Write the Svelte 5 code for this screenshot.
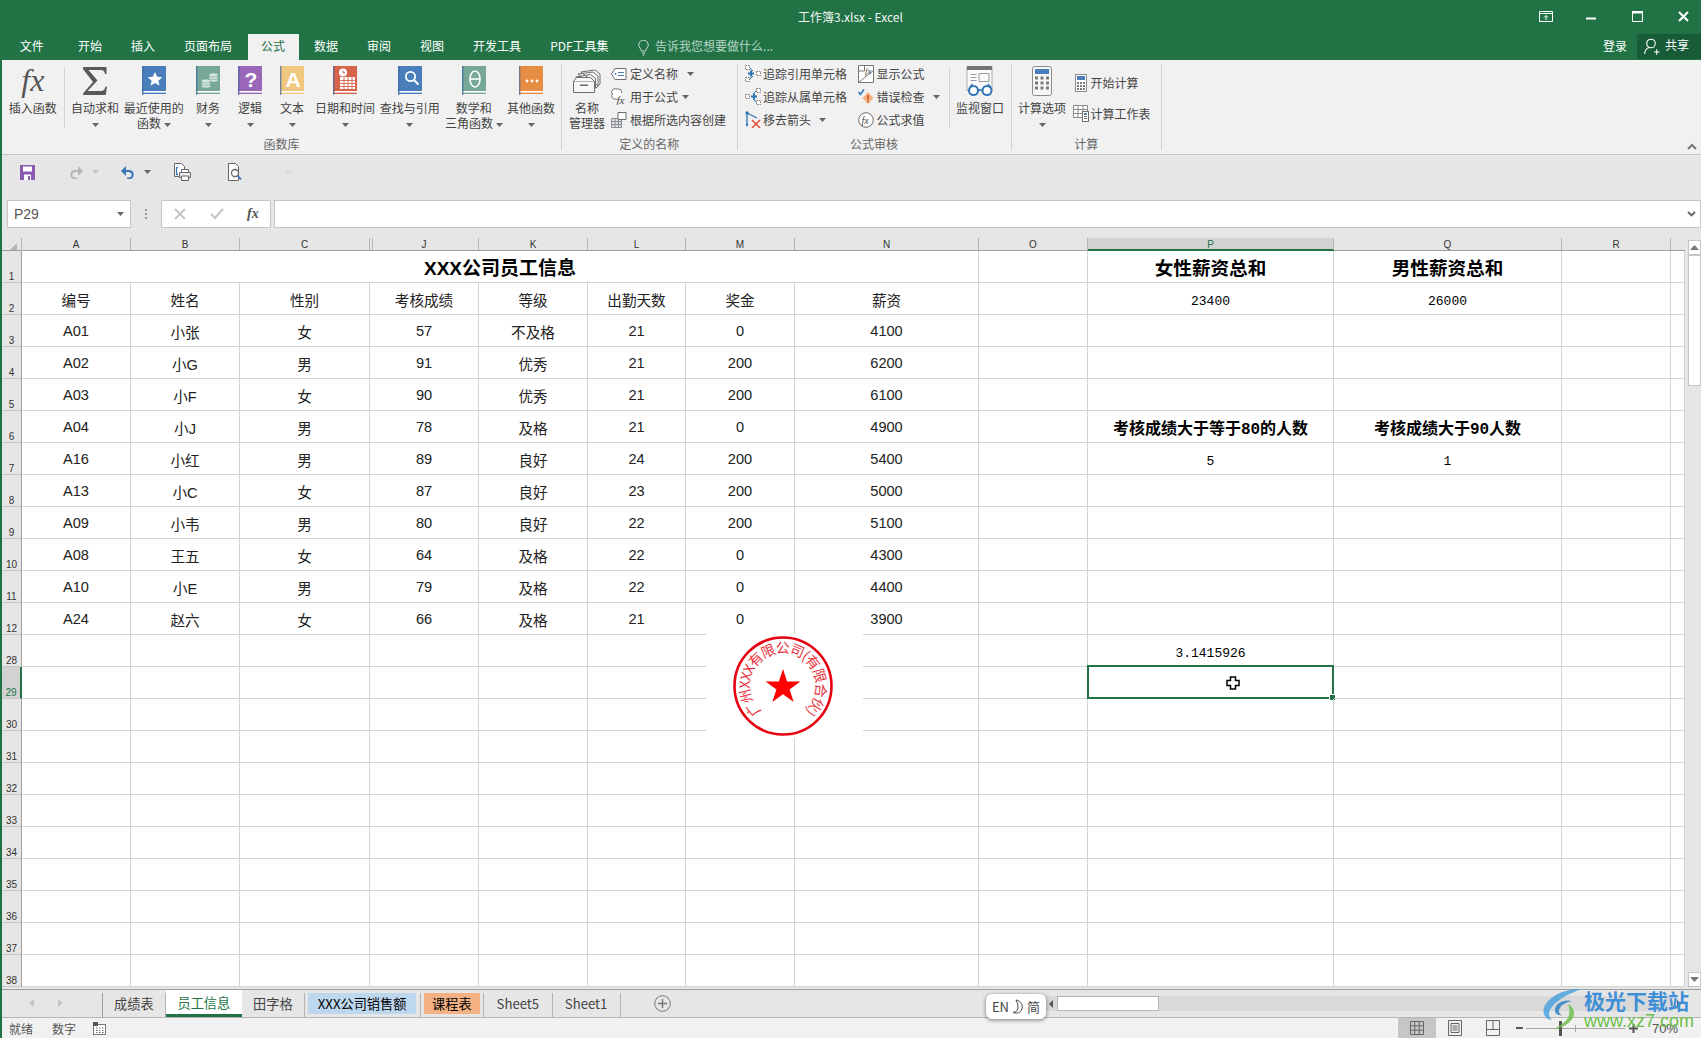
<script>
	const tabs = ['开始', '插入', '页面布局', '公式', '数据', '审阅', '视图', '开发工具', 'PDF工具集'];

	// 函数库 big buttons: [label lines, width, icon]
	const libButtons = [
		{ lines: ['自动求和'], w: 61, icon: 'sigma' },
		{ lines: ['最近使用的', '函数'], w: 56.5, color: '#4a7ebb', glyph: 'star' },
		{ lines: ['财务'], w: 52, color: '#76a797', glyph: 'coins' },
		{ lines: ['逻辑'], w: 32, color: '#9a66b8', glyph: 'q' },
		{ lines: ['文本'], w: 52, color: '#f0c77e', glyph: 'a' },
		{ lines: ['日期和时间'], w: 54, color: '#d6634a', glyph: 'date' },
		{ lines: ['查找与引用'], w: 75.4, color: '#4a7ebb', glyph: 'find' },
		{ lines: ['数学和', '三角函数'], w: 52.6, color: '#76a797', glyph: 'theta' },
		{ lines: ['其他函数'], w: 62, color: '#e68c43', glyph: 'more' }
	];

	const columns = ['A', 'B', 'C', 'J', 'K', 'L', 'M', 'N', 'O', 'P', 'Q', 'R', ''];

	const people = [
		['编号', '姓名', '性别', '考核成绩', '等级', '出勤天数', '奖金', '薪资'],
		['A01', '小张', '女', '57', '不及格', '21', '0', '4100'],
		['A02', '小G', '男', '91', '优秀', '21', '200', '6200'],
		['A03', '小F', '女', '90', '优秀', '21', '200', '6100'],
		['A04', '小J', '男', '78', '及格', '21', '0', '4900'],
		['A16', '小红', '男', '89', '良好', '24', '200', '5400'],
		['A13', '小C', '女', '87', '良好', '23', '200', '5000'],
		['A09', '小韦', '男', '80', '良好', '22', '200', '5100'],
		['A08', '王五', '女', '64', '及格', '22', '0', '4300'],
		['A10', '小E', '男', '79', '及格', '22', '0', '4400'],
		['A24', '赵六', '女', '66', '及格', '21', '0', '3900']
	];

	const rowLabels = [2, 3, 4, 5, 6, 7, 8, 9, 10, 11, 12];
	const emptyLabels = [28, 29, 30, 31, 32, 33, 34, 35, 36, 37, 38];

	// P and Q columns, keyed by row label
	const side = {
		2: [['23400', 'num'], ['26000', 'num']],
		6: [['考核成绩大于等于80的人数', 'sub'], ['考核成绩大于90人数', 'sub']],
		7: [['5', 'num'], ['1', 'num']],
		28: [['3.1415926', 'num'], ['', '']]
	};

	const sheets = [
		{ name: '成绩表', w: 62.6 },
		{ name: '员工信息', w: 76.5, cls: 'active' },
		{ name: '田字格', w: 62.5 },
		{ name: 'XXX公司销售额', w: 116, cls: 'blue' },
		{ name: '课程表', w: 63.5, cls: 'orange' },
		{ name: 'Sheet5', w: 68.5 },
		{ name: 'Sheet1', w: 68 }
	];
</script>

{#snippet arrow()}
	<svg class="caret" width="7" height="4" viewBox="0 0 7 4"><path d="M0 0h7L3.5 4z" fill="#666" /></svg>
{/snippet}

{#snippet book(color, glyph)}
	<svg width="24" height="29" viewBox="0 0 24 29">
		<rect width="24" height="28" fill={color} />
		<rect width="1.4" height="29" fill="#3d6a9e" opacity="0.7" />
		<rect x="1.4" y="25" width="22.6" height="1.6" fill="#fff" />
		{#if glyph === 'star'}
			<path d="M13 6l2.2 4.8 5 .5-3.8 3.4 1.1 5.1-4.5-2.7-4.5 2.7 1.1-5.1-3.8-3.4 5-.5z" fill="#fff" />
		{:else if glyph === 'coins'}
			<g fill="#d9e7e2" stroke="#76a797" stroke-width="0.7">
				<ellipse cx="17.5" cy="14" rx="4.6" ry="2" /><ellipse cx="17.5" cy="11.5" rx="4.6" ry="2" /><ellipse cx="17.5" cy="9" rx="4.6" ry="2" />
				<ellipse cx="10" cy="20" rx="4.6" ry="2" /><ellipse cx="10" cy="17.5" rx="4.6" ry="2" /><ellipse cx="10" cy="15" rx="4.6" ry="2" />
			</g>
		{:else if glyph === 'q'}
			<text x="13" y="21" text-anchor="middle" class="book-text" font-size="21">?</text>
		{:else if glyph === 'a'}
			<text x="13" y="21" text-anchor="middle" class="book-text" font-size="21">A</text>
		{:else if glyph === 'date'}
			<circle cx="10" cy="6.5" r="4" fill="#fff" />
			<path d="M10 4.5v2.2h2" stroke="#d6634a" stroke-width="1" fill="none" />
			<path d="M7 11h15v12H7z" fill="#fff" />
			<path d="M7 14.5h15M7 17.5h15M7 20.5h15M11 11v12M15 11v12M19 11v12" stroke="#d6634a" stroke-width="0.9" />
		{:else if glyph === 'find'}
			<circle cx="12.5" cy="10.5" r="4.6" fill="none" stroke="#fff" stroke-width="1.8" />
			<path d="M16 14l4.5 4.5" stroke="#fff" stroke-width="2.2" />
		{:else if glyph === 'theta'}
			<ellipse cx="13" cy="13" rx="5" ry="8" fill="none" stroke="#fff" stroke-width="1.6" />
			<path d="M8 13h10" stroke="#fff" stroke-width="1.6" />
		{:else if glyph === 'more'}
			<circle cx="8" cy="15" r="1.4" fill="#fff" /><circle cx="13" cy="15" r="1.4" fill="#fff" /><circle cx="18" cy="15" r="1.4" fill="#fff" />
		{/if}
	</svg>
{/snippet}

<div class="app">
	<header class="titlebar">
		<span class="doc-title">工作簿3.xlsx - Excel</span>
		<div class="win-btns">
			<svg width="14" height="11" viewBox="0 0 14 11"><path d="M.5.500h13v10H.5zM.5 2.500h13" fill="none" stroke="#fff" /><path d="M7 9V4.500M5 6.500l2-2 2 2" fill="none" stroke="#fff" /></svg>
			<svg class="w-min" width="10" height="3" viewBox="0 0 10 3"><rect width="10" height="2" y="0.5" fill="#fff" /></svg>
			<svg class="w-max" width="11" height="11" viewBox="0 0 11 11"><path d="M.5.500h10v10H.5z" fill="none" stroke="#fff" /><rect width="11" height="2.5" fill="#fff" /></svg>
			<svg class="w-close" width="11" height="11" viewBox="0 0 11 11"><path d="M1 1l9 9M10 1l-9 9" stroke="#fff" stroke-width="2" /></svg>
		</div>
	</header>

	<nav class="tabbar">
		<span class="tab file">文件</span>
		{#each tabs as t}
			<span class="tab" class:on={t === '公式'}>{t}</span>
		{/each}
		<svg class="bulb" width="11" height="16" viewBox="0 0 11 16"><path d="M3.500 11C3 8.500.7 7.500.7 5a4.800 4.800 0 0 1 9.600 0c0 2.500-2.300 3.500-2.800 6zM3.800 13h3.400M4.500 15h2" fill="none" stroke="#c9dcd0" /></svg>
		<span class="tell">告诉我您想要做什么...</span>
		<span class="login">登录</span>
		<span class="share">
			<svg width="16" height="17" viewBox="0 0 16 17"><circle cx="7" cy="5.500" r="4.300" fill="none" stroke="#fff" stroke-width="1.100" /><path d="M.6 16c.4-3.500 2.400-5.800 4.400-6.500M10 14h5.500M12.700 11.300v5.500" fill="none" stroke="#fff" stroke-width="1.100" /></svg>
			<span>共享</span>
		</span>
	</nav>

	<section class="ribbon">
		<div class="group lib">
			<div class="body">
				<div class="big fxbtn" style:width="61.6px">
					<div class="ico"><span class="fx">fx</span></div>
					<span>插入函数</span>
				</div>
				<i class="vsep"></i>
				{#each libButtons as b}
					<div class="big" style:width="{b.w}px">
						<div class="ico">
							{#if b.icon === 'sigma'}
								<svg width="24" height="28" viewBox="0 0 24 28"><path d="M0 0h23.500v7h-1.500c-.5-2.800-1.500-4-4-4H5.500l9 10.500L4.500 24H18c2.500 0 3.800-1.300 4.500-4.500H24L22.800 28H0v-1.500L10 15 0 2z" fill="#595959" /></svg>
							{:else}
								{@render book(b.color, b.glyph)}
							{/if}
						</div>
						{#each b.lines as line, i}
							<span class="line">{line}{#if i === 1}&nbsp;{@render arrow()}{/if}</span>
						{/each}
						{#if b.lines.length === 1}
							<span class="caret-row">{@render arrow()}</span>
						{/if}
					</div>
				{/each}
			</div>
			<div class="label">函数库</div>
		</div>

		<div class="group names">
			<div class="body">
				<div class="big mgr">
					<div class="ico">
						<svg width="30" height="29" viewBox="0 0 30 29" fill="#f7f7f7" stroke="#6d6d6d"><path d="M9 6l14-2 5 4v10l-2 2zM6 8l15-2 5 4v10l-2 2zM3.500 11l15-2.500 5 4v10" /><path d="M1.500 15.500h21v11h-21z" /><path d="M1.500 15.500l3-4h14l4 4" /><rect x="8" y="18.500" width="8" height="1.500" fill="#6d6d6d" stroke="none" /></svg>
					</div>
					<span class="line">名称</span>
					<span class="line">管理器</span>
				</div>
				<div class="list">
					<div class="small">
						<svg width="16" height="12" viewBox="0 0 16 12"><path d="M4 .5h11v11H4L.5 6z" fill="#fff" stroke="#6d6d6d" /><circle cx="4.500" cy="6" r="1" fill="#4a7ebb" /><path d="M7 4.500h6M7 7.500h6" stroke="#4a7ebb" /></svg>
						<span>定义名称</span><b class="gap10">{@render arrow()}</b>
					</div>
					<div class="small">
						<svg width="16" height="17" viewBox="0 0 16 17"><path d="M6 11H3.500a3 3 0 0 1-2-5 3 3 0 0 1 3-5h3a3 3 0 0 1 3 4" fill="#fff" stroke="#6d6d6d" /><text x="5.500" y="15.500" class="mini-fx" font-size="11">fx</text></svg>
						<span>用于公式</span><b class="gap5">{@render arrow()}</b>
					</div>
					<div class="small">
						<svg width="16" height="16" viewBox="0 0 16 16"><path d="M.5 6.500h10v9H.5zM.5 9.500h10M.5 12.500h10M4 6.500v9M7.500 6.500v9" fill="#dfe6ee" stroke="#8a8a8a" /><path d="M7 .5h8v7H7z" fill="#fff" stroke="#6d6d6d" /></svg>
						<span>根据所选内容创建</span>
					</div>
				</div>
			</div>
			<div class="label">定义的名称</div>
		</div>

		<div class="group audit">
			<div class="body">
				<div class="list col1">
					<div class="small">
						<svg width="16" height="17" viewBox="0 0 16 17"><path d="M.5.500h4v4h-4zM.5 12.500h4v4h-4zM11.500 6.500h4v4h-4z" fill="#fff" stroke="#777" stroke-dasharray="1.500 1" /><path d="M3 8.500h6M6 5.500v6" stroke="#2e75b6" stroke-width="2" /><path d="M5 3l3 3M5 14l3-3" stroke="#2e75b6" /></svg>
						<span>追踪引用单元格</span>
					</div>
					<div class="small">
						<svg width="16" height="17" viewBox="0 0 16 17"><path d="M11.500.500h4v4h-4zM11.500 12.500h4v4h-4zM.5 6.500h4v4h-4z" fill="#fff" stroke="#777" stroke-dasharray="1.500 1" /><path d="M6 8.500h6M9 5.500v6" stroke="#2e75b6" stroke-width="2" /><path d="M8 6l3-3M8 11l3 3" stroke="#2e75b6" /></svg>
						<span>追踪从属单元格</span>
					</div>
					<div class="small">
						<svg width="16" height="17" viewBox="0 0 16 17"><path d="M2 2l10 5M2 2v12" stroke="#2e75b6" stroke-width="1.300" fill="none" /><circle cx="2" cy="2" r="1.700" fill="#2e75b6" /><path d="M.5 13l1.500 3 1.500-3z" fill="#2e75b6" /><path d="M7 9l8 8M15 9l-8 8" stroke="#e0533d" stroke-width="1.600" /></svg>
						<span>移去箭头</span><b class="gap12">{@render arrow()}</b>
					</div>
				</div>
				<div class="list col2">
					<div class="small">
						<svg width="16" height="18" viewBox="0 0 16 18"><path d="M.5.500h15v17H.5z" fill="#fff" stroke="#777" /><path d="M.5 6h6V.5M.5 17.500l15-12" fill="none" stroke="#777" /><text x="7" y="9" class="mini-fx" font-size="9">fx</text></svg>
						<span>显示公式</span>
					</div>
					<div class="small">
						<svg width="16" height="16" viewBox="0 0 16 16"><path d="M10 3L15.500 9 10 15 4.500 9z" fill="#f4b183" /><path d="M10 6v5M10 12v1.500" stroke="#d4501e" stroke-width="1.500" /><path d="M.5 3l2 2.500L6 .5" fill="none" stroke="#2e75b6" stroke-width="1.500" /></svg>
						<span>错误检查</span><b class="gap12">{@render arrow()}</b>
					</div>
					<div class="small">
						<svg width="16" height="16" viewBox="0 0 16 16"><circle cx="8" cy="8" r="7.300" fill="#fff" stroke="#6d6d6d" /><text x="3.500" y="11.500" class="mini-fx" font-size="10">fx</text></svg>
						<span>公式求值</span>
					</div>
				</div>
				<i class="vsep audit-sep"></i>
				<div class="big watch">
					<div class="ico">
						<svg width="29" height="30" viewBox="0 0 29 30"><path d="M1 .5h25v24H1z" fill="#fafafa" stroke="#aaa" /><rect x="1" width="25" height="4" fill="#737373" /><path d="M13 7.500h10v8H13zM4.500 8.500h6M4.500 11.500h6M4.500 14.500h6" fill="none" stroke="#9a9a9a" /><circle cx="7.500" cy="24.500" r="4.500" fill="#fff" stroke="#2e75b6" stroke-width="2" /><circle cx="21" cy="24.500" r="4.500" fill="#fff" stroke="#2e75b6" stroke-width="2" /><path d="M12 24h5M3.500 22l3-4M25 22l-3-4" stroke="#2e75b6" stroke-width="1.500" /></svg>
					</div>
					<span class="line">监视窗口</span>
				</div>
			</div>
			<div class="label">公式审核</div>
		</div>

		<div class="group calc">
			<div class="body">
				<div class="big options">
					<div class="ico">
						<svg width="20" height="30" viewBox="0 0 20 30"><rect x=".5" y=".5" width="19" height="29" rx="2" fill="#f7f7f7" stroke="#8c8c8c" /><rect x="3" y="3" width="14" height="5" fill="#4a7ebb" /><path d="M3 10.500h3v3H3zM8.500 10.500h3v3h-3zM14 10.500h3v3h-3zM3 15.500h3v3H3zM8.500 15.500h3v3h-3zM14 15.500h3v3h-3zM3 20.500h3v3H3zM8.500 20.500h3v3h-3zM14 20.500h3v3h-3z" fill="#7a7a7a" /></svg>
					</div>
					<span class="line">计算选项</span>
					<span class="caret-row">{@render arrow()}</span>
				</div>
				<div class="list calc-list">
					<div class="small tall">
						<svg width="12" height="18" viewBox="0 0 12 18"><rect x=".5" y=".5" width="11" height="17" fill="#fff" stroke="#8c8c8c" /><rect x="2" y="2" width="8" height="4" fill="#4a7ebb" /><path d="M2 8h2v2H2zM5 8h2v2H5zM8 8h2v2H8zM2 11h2v2H2zM5 11h2v2H5zM8 11h2v2H8zM2 14h2v2H2zM5 14h2v2H5zM8 14h2v2H8z" fill="#7a7a7a" /></svg>
						<span>开始计算</span>
					</div>
					<div class="small tall">
						<svg width="16" height="17" viewBox="0 0 16 17"><path d="M.5.500h14v12H.5zM.5 4.500h14M.5 8.500h14M5 .5v12M10 .5v12" fill="#fff" stroke="#8c8c8c" /><rect x="9.500" y="6.500" width="6" height="10" fill="#fff" stroke="#6d6d6d" /><rect x="11" y="8" width="3" height="2" fill="#4a7ebb" /><path d="M11 11.500h3M11 13.500h3" stroke="#777" /></svg>
						<span>计算工作表</span>
					</div>
				</div>
			</div>
			<div class="label">计算</div>
		</div>

		<svg class="collapse" width="10" height="7" viewBox="0 0 10 7"><path d="M1 6l4-4 4 4" fill="none" stroke="#777" stroke-width="2" /></svg>
	</section>

	<section class="qat">
		<svg class="q-save" width="15" height="15" viewBox="0 0 15 15"><path d="M0 0h15v15H0z" fill="#8a5bb0" /><rect x="3" y="1.500" width="9" height="5" fill="#fff" /><rect x="4" y="9.500" width="7" height="5.500" fill="#fff" /><rect x="8" y="11" width="2" height="4" fill="#8a5bb0" /></svg>
		<svg class="q-redo" width="15" height="13" viewBox="0 0 15 13"><path d="M13 5H5.500a3.800 3.800 0 0 0 0 7.500H8" fill="none" stroke="#b5b5b5" stroke-width="2" /><path d="M9 0l5 5-5 5z" fill="#b5b5b5" /></svg>
		<svg class="q-drop1" width="7" height="4" viewBox="0 0 7 4"><path d="M0 0h7L3.500 4z" fill="#c2c2c2" /></svg>
		<svg class="q-undo" width="15" height="13" viewBox="0 0 15 13"><path d="M2 5h7.500a3.800 3.800 0 0 1 0 7.500H7" fill="none" stroke="#3a76b8" stroke-width="2" /><path d="M6 0L1 5l5 5z" fill="#3a76b8" /></svg>
		<svg class="q-drop2" width="7" height="4" viewBox="0 0 7 4"><path d="M0 0h7L3.500 4z" fill="#666" /></svg>
		<svg class="q-print" width="17" height="18" viewBox="0 0 17 18"><path d="M.5.500h7l3 3v10H.5z" fill="#fff" stroke="#666" /><path d="M2.500 4.500h1.500M2.500 4.500v7h1.500" fill="none" stroke="#3a76b8" stroke-width="1.300" /><path d="M5.500 9.500h11v5h-11z" fill="#eee" stroke="#666" /><path d="M7.500 6.500h7v3h-7zM7.500 13h7v4.500h-7z" fill="#fff" stroke="#666" /></svg>
		<svg class="q-find" width="14" height="18" viewBox="0 0 14 18"><path d="M.5.500h7l3 3v14H.5z" fill="#fff" stroke="#666" /><circle cx="7" cy="10" r="3.500" fill="#fff" stroke="#666" stroke-width="1.300" /><path d="M9.500 12.500l3.500 4" stroke="#3a76b8" stroke-width="1.800" /></svg>
		<svg class="q-more" width="7" height="6" viewBox="0 0 7 6"><path d="M0 0h7M0 2h7L3.500 6z" stroke="#ddd" fill="#ddd" /></svg>
	</section>

	<section class="formula">
		<div class="namebox">
			<span>P29</span>
			<svg width="7" height="4" viewBox="0 0 7 4"><path d="M0 0h7L3.500 4z" fill="#666" /></svg>
		</div>
		<div class="dots"><i></i><i></i><i></i></div>
		<div class="fxbox">
			<svg width="12" height="12" viewBox="0 0 12 12"><path d="M1 1l10 10M11 1L1 11" stroke="#c4c4c4" stroke-width="1.800" /></svg>
			<svg width="14" height="12" viewBox="0 0 14 12"><path d="M1 6l4 4 8-9" fill="none" stroke="#c4c4c4" stroke-width="2.200" /></svg>
			<span class="mini-fx-label">fx</span>
		</div>
		<div class="input">
			<svg width="9" height="6" viewBox="0 0 9 6"><path d="M1 1l3.500 3.500L8 1" fill="none" stroke="#666" stroke-width="1.800" /></svg>
		</div>
	</section>

	<section class="workarea">
		<div class="sheet">
			<div class="row head">
				<div class="corner"><svg width="7" height="7" viewBox="0 0 7 7"><path d="M7 0v7H0z" fill="#b5b5b5" /></svg></div>
				{#each columns as c}
					<div class="colh" class:cur={c === 'P'} class:after-hidden={c === 'J'}>{c}</div>
				{/each}
			</div>

			<div class="row">
				<div class="rowh">1</div>
				<div class="cell title">XXX公司员工信息</div>
				<div class="cell"></div>
				<div class="cell heading">女性薪资总和</div>
				<div class="cell heading">男性薪资总和</div>
				<div class="cell"></div>
				<div class="cell"></div>
			</div>

			{#each people as p, i}
				{@const label = rowLabels[i]}
				<div class="row">
					<div class="rowh">{label}</div>
					{#each p as v}
						<div class="cell">{v}</div>
					{/each}
					<div class="cell"></div>
					<div class="cell {side[label]?.[0][1] ?? ''}">{side[label]?.[0][0] ?? ''}</div>
					<div class="cell {side[label]?.[1][1] ?? ''}">{side[label]?.[1][0] ?? ''}</div>
					<div class="cell"></div>
					<div class="cell"></div>
				</div>
			{/each}

			{#each emptyLabels as label}
				<div class="row">
					<div class="rowh" class:cur={label === 29}>{label}</div>
					{#each columns as c, j}
						<div class="cell {j === 9 ? (side[label]?.[0][1] ?? '') : ''}">
							{#if j === 9}{side[label]?.[0][0] ?? ''}{/if}
							{#if j === 9 && label === 29}
								<div class="selection"><i class="handle"></i></div>
								<svg class="cursor" width="14" height="14" viewBox="0 0 14 14"><path d="M4.500 1h5v3.500H13v5H9.500V13h-5V9.500H1v-5h3.500z" fill="#fff" stroke="#000" stroke-width="1.500" /></svg>
							{/if}
						</div>
					{/each}
				</div>
			{/each}

			<svg class="stamp" width="157" height="104" viewBox="0 0 157 104">
				<rect width="157" height="104" fill="#fff" />
				<circle cx="77" cy="52" r="48.500" fill="none" stroke="#e60012" stroke-width="2.600" />
				<path id="stamp-arc" d="M55.800 77.300 A33 33 0 1 1 98.200 77.300" fill="none" />
				<text class="stamp-text" font-size="14" fill="#e8303a">
					<textPath href="#stamp-arc" textLength="160" lengthAdjust="spacing">广州XXX有限公司(有限合伙)</textPath>
				</text>
				<path d="M77 35l4.100 12.600h13.300l-10.800 7.800 4.100 12.700L77 60.300l-10.700 7.800 4.100-12.700-10.800-7.800h13.300z" fill="#ff0000" />
			</svg>
		</div>

		<aside class="vscroll">
			<div class="vbtn"><svg width="9" height="5" viewBox="0 0 9 5"><path d="M4.500 0L9 5H0z" fill="#777" /></svg></div>
			<div class="vthumb"></div>
			<div class="vspace"></div>
			<div class="vbtn"><svg width="9" height="5" viewBox="0 0 9 5"><path d="M0 0h9L4.500 5z" fill="#777" /></svg></div>
		</aside>
	</section>

	<section class="sheetbar">
		<div class="nav">
			<svg width="5" height="8" viewBox="0 0 5 8"><path d="M5 0v8L0 4z" fill="#c4c4c4" /></svg>
			<svg width="5" height="8" viewBox="0 0 5 8"><path d="M0 0v8l5-4z" fill="#c4c4c4" /></svg>
		</div>
		<div class="sheets">
			{#each sheets as s}
				<div class="sheet-tab {s.cls ?? ''}" style:width="{s.w}px"><span>{s.name}</span></div>
			{/each}
		</div>
		<svg class="add" width="17" height="17" viewBox="0 0 17 17"><circle cx="8.500" cy="8.500" r="7.800" fill="none" stroke="#777" /><path d="M8.500 4v9M4 8.500h9" stroke="#777" stroke-width="1.400" /></svg>
		<div class="hscroll">
			<div class="hbtn"><svg width="4" height="8" viewBox="0 0 4 8"><path d="M4 0v8L0 4z" fill="#555" /></svg></div>
			<div class="hthumb"></div>
			<div class="hbtn end"><svg width="4" height="8" viewBox="0 0 4 8"><path d="M0 0v8l4-4z" fill="#555" /></svg></div>
		</div>
	</section>

	<footer class="status">
		<span class="st1">就绪</span>
		<span class="st2">数字</span>
		<svg width="13" height="13" viewBox="0 0 13 13"><rect x=".5" y="2.500" width="12" height="10" fill="#fff" stroke="#777" /><rect width="5" height="4" fill="#555" /><path d="M3 6h1.500M6 6h1.500M9 6h1.500M3 8.500h1.500M6 8.500h1.500M9 8.500h1.500M3 10.500h1.500M6 10.500h1.500M9 10.500h1.500" stroke="#666" /></svg>
		<div class="views">
			<div class="view on"><svg width="14" height="14" viewBox="0 0 14 14"><path d="M.5.500h13v13H.5zM.5 4.800h13M.5 9.200h13M4.800.5v13M9.200.5v13" fill="none" stroke="#666" /></svg></div>
			<div class="view"><svg width="14" height="16" viewBox="0 0 14 16"><path d="M.5.500h13v15H.5z" fill="none" stroke="#666" /><path d="M3 3.500h8v9H3zM4.500 6h5M4.500 8h5M4.500 10h5" fill="none" stroke="#666" /></svg></div>
			<div class="view"><svg width="14" height="16" viewBox="0 0 14 16"><path d="M.5.500h13v15H.5zM7 .5v9M.5 9.500h13" fill="none" stroke="#666" /></svg></div>
		</div>
		<div class="zoom">
			<i class="minus"></i>
			<div class="slider"><i class="tick"></i><i class="knob"></i></div>
			<svg width="9" height="9" viewBox="0 0 9 9"><path d="M4.500 0v9M0 4.500h9" stroke="#555" stroke-width="2" /></svg>
			<span>70%</span>
		</div>
	</footer>

	<div class="ime"><span>EN</span><svg width="12" height="15" viewBox="0 0 12 15"><path d="M4 1c5 1 7 5 6 9s-5 4.500-9 3.500c3.500-.5 5-2.500 5-5.500S5 3.500 4 1z" fill="none" stroke="#444" /></svg><span>简</span></div>

	<div class="mark">
		<svg width="44" height="42" viewBox="0 0 44 42">
			<path d="M40 1C24 0 6 8 2 20c-2 7 3 12 8 12-4-3-4-8 0-13C16 11 28 5 40 1z" fill="#4aa3df" opacity="0.85" />
			<path d="M30 13c-8-2-16 2-17 8-1 4 3 7 7 6-3-1-4-4-2-7 2-4 7-6 12-7z" fill="#2f7fc1" opacity="0.85" />
			<path d="M26 16c6 3 8 9 4 15-3 5-10 9-18 10 9-5 14-9 15-14 1-4 0-8-1-11z" fill="#6cc04a" opacity="0.85" />
		</svg>
		<div class="mark-text">
			<span class="mk1">极光下载站</span>
			<span class="mk2">www.xz7.com</span>
		</div>
	</div>
</div>

<style>
	:global(body) {
		margin: 0;
		background: #fff;
	}
	.app {
		position: relative;
		width: 1701px;
		height: 1038px;
		box-sizing: border-box;
		border-left: 2px solid #217346;
		overflow: hidden;
		display: flex;
		flex-direction: column;
		font-family: "Noto Sans CJK SC", "Liberation Sans", sans-serif;
		font-size: 12px;
		color: #444;
		background: #e6e6e6;
	}
	.titlebar {
		height: 34px;
		flex: none;
		background: #217346;
		color: #fff;
		position: relative;
		display: flex;
		align-items: center;
	}
	.doc-title {
		position: absolute;
		left: 796px;
		top: 8px;
		line-height: 18px;
		color: #f2f7f4;
	}
	.win-btns {
		margin-left: auto;
		display: flex;
		align-items: center;
		padding: 0 12px 2px 0;
	}
	.win-btns svg {
		display: block;
	}
	.w-min {
		margin: 4px 0 0 33px;
	}
	.w-max {
		margin-left: 36px;
	}
	.w-close {
		margin-left: 35px;
	}
	.tabbar {
		height: 26px;
		flex: none;
		background: #217346;
		color: #fff;
		display: flex;
		align-items: stretch;
		line-height: 24px;
		margin-left: -2px;
	}
	.tab {
		padding: 0 14.5px;
	}
	.tab.file {
		width: 63.5px;
		box-sizing: border-box;
		padding: 0;
		text-align: center;
	}
	.tab.on {
		background: #f1f1f1;
		color: #217346;
		margin: 0 1px;
		padding: 0 13.5px;
	}
	.bulb {
		margin: 6px 0 0 15px;
	}
	.tell {
		margin-left: 6px;
		color: #b9d3c4;
	}
	.login {
		margin-left: auto;
		margin-right: 10px;
	}
	.share {
		width: 64px;
		background: #185c37;
		display: flex;
		align-items: center;
		gap: 5px;
		padding-left: 7px;
		box-sizing: border-box;
		line-height: 20px;
		height: 25px;
	}
	.share span {
		margin-top: -4px;
	}
	.ribbon {
		height: 95px;
		flex: none;
		box-sizing: border-box;
		background: #f1f1f1;
		border-bottom: 1px solid #c6c6c6;
		display: flex;
		position: relative;
		line-height: 15px;
	}
	.group {
		display: flex;
		flex-direction: column;
		border-right: 1px solid #d2d2d2;
		margin: 4px 0;
		box-sizing: border-box;
	}
	.group.lib {
		width: 560px;
	}
	.group.names {
		width: 175.5px;
	}
	.group.audit {
		width: 274px;
	}
	.group.calc {
		width: 150.5px;
	}
	.body {
		height: 72px;
		display: flex;
		flex: none;
	}
	.label {
		text-align: center;
		color: #666;
		line-height: 16px;
	}
	.vsep {
		width: 1px;
		height: 60px;
		margin-top: 4px;
		background: #d2d2d2;
		flex: none;
	}
	.big {
		display: flex;
		flex-direction: column;
		align-items: center;
		flex: none;
		white-space: nowrap;
	}
	.big .line,
	.fxbtn > span {
		display: block;
		height: 15px;
	}
	.ico {
		height: 29px;
		margin: 2px 0 5px;
		display: flex;
		align-items: center;
		justify-content: center;
	}
	.ico svg {
		display: block;
	}
	.fx {
		font-family: "Liberation Serif", serif;
		font-style: italic;
		font-size: 32px;
		line-height: 29px;
		color: #555;
	}
	.caret {
		vertical-align: middle;
	}
	.caret-row {
		display: block;
		height: 15px;
	}
	.mgr {
		width: 50px;
	}
	.list {
		display: flex;
		flex-direction: column;
		margin-top: -2px;
	}
	.small {
		height: 23px;
		display: flex;
		align-items: center;
		white-space: nowrap;
	}
	.small > svg {
		width: 16px;
		flex: none;
		margin-right: 2px;
	}
	.small b {
		font-weight: normal;
		display: flex;
	}
	.gap10 {
		margin-left: 9px;
	}
	.gap5 {
		margin-left: 4px;
	}
	.gap12 {
		margin-left: 8px;
	}
	.names .list {
		margin-left: -1px;
	}
	.names .small > svg {
		margin-right: 3px;
	}
	.col1 {
		margin-left: 7.5px;
		width: 112.5px;
	}
	.col2 {
		width: 91px;
	}
	.col2 .small > svg {
		margin-right: 3px;
	}
	.watch {
		width: 61px;
	}
	.options {
		width: 61px;
	}
	.calc-list {
		padding-top: 5px;
	}
	.small.tall {
		height: 31px;
	}
	.collapse {
		position: absolute;
		right: 4px;
		bottom: 4px;
	}
	.book-text {
		font-family: "Liberation Sans", sans-serif;
		font-weight: bold;
		fill: #fff;
	}
	.mini-fx {
		font-family: "Liberation Serif", serif;
		font-style: italic;
		fill: #444;
	}
	.qat {
		height: 45px;
		flex: none;
		display: flex;
		align-items: center;
		padding-bottom: 11px;
		box-sizing: border-box;
	}
	.q-save {
		margin-left: 18px;
	}
	.q-redo {
		margin-left: 34px;
	}
	.q-drop1 {
		margin-left: 8px;
	}
	.q-undo {
		margin-left: 21px;
	}
	.q-drop2 {
		margin-left: 9px;
	}
	.q-print {
		margin-left: 23px;
	}
	.q-find {
		margin-left: 37px;
	}
	.q-more {
		margin-left: 43px;
	}
	.formula {
		height: 28px;
		flex: none;
		display: flex;
		align-items: stretch;
		margin-bottom: 10px;
	}
	.namebox {
		width: 124px;
		margin-left: 5px;
		box-sizing: border-box;
		background: #fff;
		border: 1px solid #c6c6c6;
		display: flex;
		align-items: center;
		justify-content: space-between;
		padding: 0 6px 0 6px;
		font-family: "Liberation Sans", sans-serif;
		font-size: 14px;
		color: #555;
	}
	.dots {
		width: 30px;
		display: flex;
		flex-direction: column;
		align-items: center;
		justify-content: center;
		gap: 2px;
	}
	.dots i {
		width: 2px;
		height: 2px;
		background: #9a9a9a;
	}
	.fxbox {
		width: 110px;
		box-sizing: border-box;
		background: #fff;
		border: 1px solid #c6c6c6;
		display: flex;
		align-items: center;
		padding-left: 12px;
		gap: 24px;
	}
	.mini-fx-label {
		font-family: "Liberation Serif", serif;
		font-style: italic;
		font-weight: bold;
		font-size: 14px;
		color: #555;
		margin-left: -1px;
	}
	.input {
		flex: 1;
		margin-left: 3px;
		box-sizing: border-box;
		background: #fff;
		border: 1px solid #c6c6c6;
		display: flex;
		align-items: center;
		justify-content: flex-end;
		padding-right: 4px;
	}
	.workarea {
		height: 749px;
		flex: none;
		display: flex;
	}
	.sheet {
		width: 1683px;
		flex: none;
		position: relative;
		background: #fff;
	}
	.row {
		display: grid;
		grid-template-columns: 20px 109px 109px 130px 109px 109px 98px 109px 184px 109px 246px 228px 109px 14px;
		height: 32px;
		box-sizing: border-box;
	}
	.row.head {
		height: 13px;
		background: #e6e6e6;
		border-bottom: 1px solid #9f9f9f;
	}
	.corner {
		display: flex;
		justify-content: flex-end;
		align-items: flex-end;
		padding: 0 4px 1px 0;
		border-right: 1px solid #b5b5b5;
	}
	.corner svg {
		display: block;
	}
	.colh {
		border-right: 1px solid #b5b5b5;
		font-family: "Liberation Sans", sans-serif;
		font-size: 10px;
		line-height: 14px;
		text-align: center;
		color: #333;
		height: 12px;
	}
	.colh.after-hidden {
		box-shadow: inset 2px 0 #e6e6e6, inset 3px 0 #b5b5b5;
	}
	.colh.cur {
		background: #d2d2d2;
		color: #217346;
		border-bottom: 2px solid #217346;
		height: 13px;
		box-sizing: border-box;
	}
	.colh:nth-last-child(1) {
		border-right: 0;
	}
	.rowh {
		background: #e6e6e6;
		border-right: 1px solid #9f9f9f;
		border-bottom: 1px solid #c6c6c6;
		font-family: "Liberation Sans", sans-serif;
		font-size: 10px;
		line-height: 10px;
		color: #333;
		text-align: center;
		display: flex;
		align-items: flex-end;
		justify-content: center;
		box-sizing: border-box;
	}
	.rowh.cur {
		background: #d2d2d2;
		color: #217346;
		border-right: 2px solid #217346;
	}
	.cell {
		border-right: 1px solid #d4d4d4;
		border-bottom: 1px solid #d4d4d4;
		box-sizing: border-box;
		display: flex;
		align-items: center;
		justify-content: center;
		position: relative;
		font-family: "Liberation Sans", "Noto Sans CJK SC", sans-serif;
		font-size: 14.6px;
		color: #222;
		white-space: nowrap;
		padding-top: 1px;
	}
	.cell.title {
		grid-column: span 8;
		font-size: 19px;
		font-weight: bold;
		color: #000;
		padding-top: 0;
	}
	.cell.heading {
		font-size: 18.6px;
		font-weight: bold;
		color: #000;
		padding-top: 0;
	}
	.cell.sub {
		font-family: "Liberation Mono", "Noto Sans CJK SC", sans-serif;
		font-size: 16px;
		font-weight: bold;
		color: #000;
		padding-top: 0;
	}
	.cell.num {
		font-family: "Liberation Mono", monospace;
		font-size: 13px;
		color: #000;
		padding-top: 5px;
	}
	.selection {
		position: absolute;
		left: -1px;
		top: -2px;
		width: 247px;
		height: 34px;
		box-sizing: border-box;
		border: 2px solid #217346;
	}
	.handle {
		position: absolute;
		right: -3px;
		bottom: -3px;
		width: 5px;
		height: 5px;
		background: #217346;
		border: 1px solid #fff;
		border-width: 1px 0 0 1px;
	}
	.cursor {
		position: absolute;
		left: 138px;
		top: 9px;
	}
	.stamp {
		position: absolute;
		left: 704px;
		top: 396px;
	}
	.stamp-text {
		font-family: "Noto Sans CJK SC", "Liberation Sans", sans-serif;
	}
	.vscroll {
		flex: 1;
		display: flex;
		flex-direction: column;
		padding: 2px 0 0 3px;
	}
	.vbtn {
		height: 15px;
		flex: none;
		background: #fff;
		border: 1px solid #c6c6c6;
		box-sizing: border-box;
		display: flex;
		align-items: center;
		justify-content: center;
	}
	.vthumb {
		height: 131px;
		flex: none;
		background: #fff;
		border: 1px solid #c6c6c6;
		box-sizing: border-box;
	}
	.vspace {
		flex: 1;
	}
	.sheetbar {
		height: 28px;
		flex: none;
		margin-top: 2px;
		box-sizing: border-box;
		border-top: 1px solid #9f9f9f;
		display: flex;
		align-items: flex-start;
		background: #e6e6e6;
	}
	.nav {
		width: 100px;
		display: flex;
		gap: 24px;
		padding: 9px 0 0 27px;
		box-sizing: border-box;
	}
	.nav svg {
		display: block;
	}
	.sheets {
		display: flex;
		height: 24px;
		border-left: 1px solid #9f9f9f;
		margin-top: 3px;
	}
	.sheet-tab {
		height: 100%;
		box-sizing: border-box;
		border-right: 1px solid #b5b5b5;
		display: flex;
		align-items: center;
		justify-content: center;
		font-size: 13.2px;
		color: #444;
		white-space: nowrap;
		padding-bottom: 4px;
	}
	.sheet-tab.active {
		background: #fff;
		color: #217346;
		border-right: 0;
		border-bottom: 3px solid #217346;
		margin-top: -3px;
		height: 27px;
		padding-bottom: 0;
	}
	.sheet-tab.blue,
	.sheet-tab.orange {
		padding-bottom: 0;
	}
	.sheet-tab.blue span,
	.sheet-tab.orange span {
		display: flex;
		align-items: center;
		justify-content: center;
		height: 21px;
		margin-top: -3px;
		width: calc(100% - 7px);
		background: #bdd7ee;
		color: #000;
	}
	.sheet-tab.orange span {
		background: #f4b183;
	}
	.add {
		margin: 5px 0 0 33px;
	}
	.hscroll {
		position: absolute;
		left: 1043px;
		width: 640px;
		margin-top: 6px;
		height: 15px;
		display: flex;
		background: #d9d9d9;
	}
	.hbtn {
		width: 12px;
		display: flex;
		align-items: center;
		justify-content: center;
	}
	.hbtn.end {
		margin-left: auto;
		background: #e6e6e6;
	}
	.hthumb {
		width: 102px;
		background: #fff;
		border: 1px solid #b5b5b5;
		box-sizing: border-box;
	}
	.status {
		height: 21px;
		flex: none;
		box-sizing: border-box;
		background: #f1f1f1;
		border-top: 1px solid #b5b5b5;
		display: flex;
		align-items: center;
		color: #555;
	}
	.st1 {
		margin-left: 7px;
	}
	.st2 {
		margin-left: 19px;
		margin-right: 17px;
	}
	.views {
		margin-left: auto;
		display: flex;
		height: 100%;
	}
	.view {
		width: 38px;
		display: flex;
		align-items: center;
		justify-content: center;
	}
	.view.on {
		background: #c6c6c6;
	}
	.zoom {
		display: flex;
		align-items: center;
		width: 189px;
		box-sizing: border-box;
		padding-left: 4px;
	}
	.minus {
		width: 7px;
		height: 2px;
		background: #555;
		margin-right: 3px;
	}
	.slider {
		width: 99px;
		height: 1px;
		background: #a6a6a6;
		position: relative;
		margin-right: 4px;
	}
	.tick {
		position: absolute;
		left: 49px;
		top: -3px;
		width: 1px;
		height: 7px;
		background: #a6a6a6;
	}
	.knob {
		position: absolute;
		left: 33px;
		top: -7px;
		width: 3px;
		height: 15px;
		background: #555;
	}
	.zoom span {
		margin-left: 14px;
		font-family: "Liberation Sans", sans-serif;
		font-size: 13px;
	}
	.ime {
		position: absolute;
		left: 984px;
		top: 994px;
		width: 60px;
		height: 25px;
		box-sizing: border-box;
		background: #fff;
		border-radius: 6px;
		box-shadow: 0 1px 4px rgba(0, 0, 0, 0.5);
		display: flex;
		align-items: center;
		justify-content: center;
		gap: 3px;
		font-size: 13px;
		color: #444;
	}
	.mark {
		position: absolute;
		left: 1540px;
		top: 988px;
		display: flex;
		gap: 0;
		margin-right: 0;
		pointer-events: none;
	}
	.mark svg {
		flex: none;
		margin-right: -2px;
	}
	.mark-text {
		display: flex;
		flex-direction: column;
		line-height: 20px;
		white-space: nowrap;
	}
	.mk1 {
		font-size: 21px;
		font-weight: bold;
		color: #3f8fd6;
		line-height: 24px;
	}
	.mk2 {
		font-family: "Liberation Sans", sans-serif;
		font-size: 18px;
		color: #6cc04a;
		line-height: 18px;
	}
</style>
